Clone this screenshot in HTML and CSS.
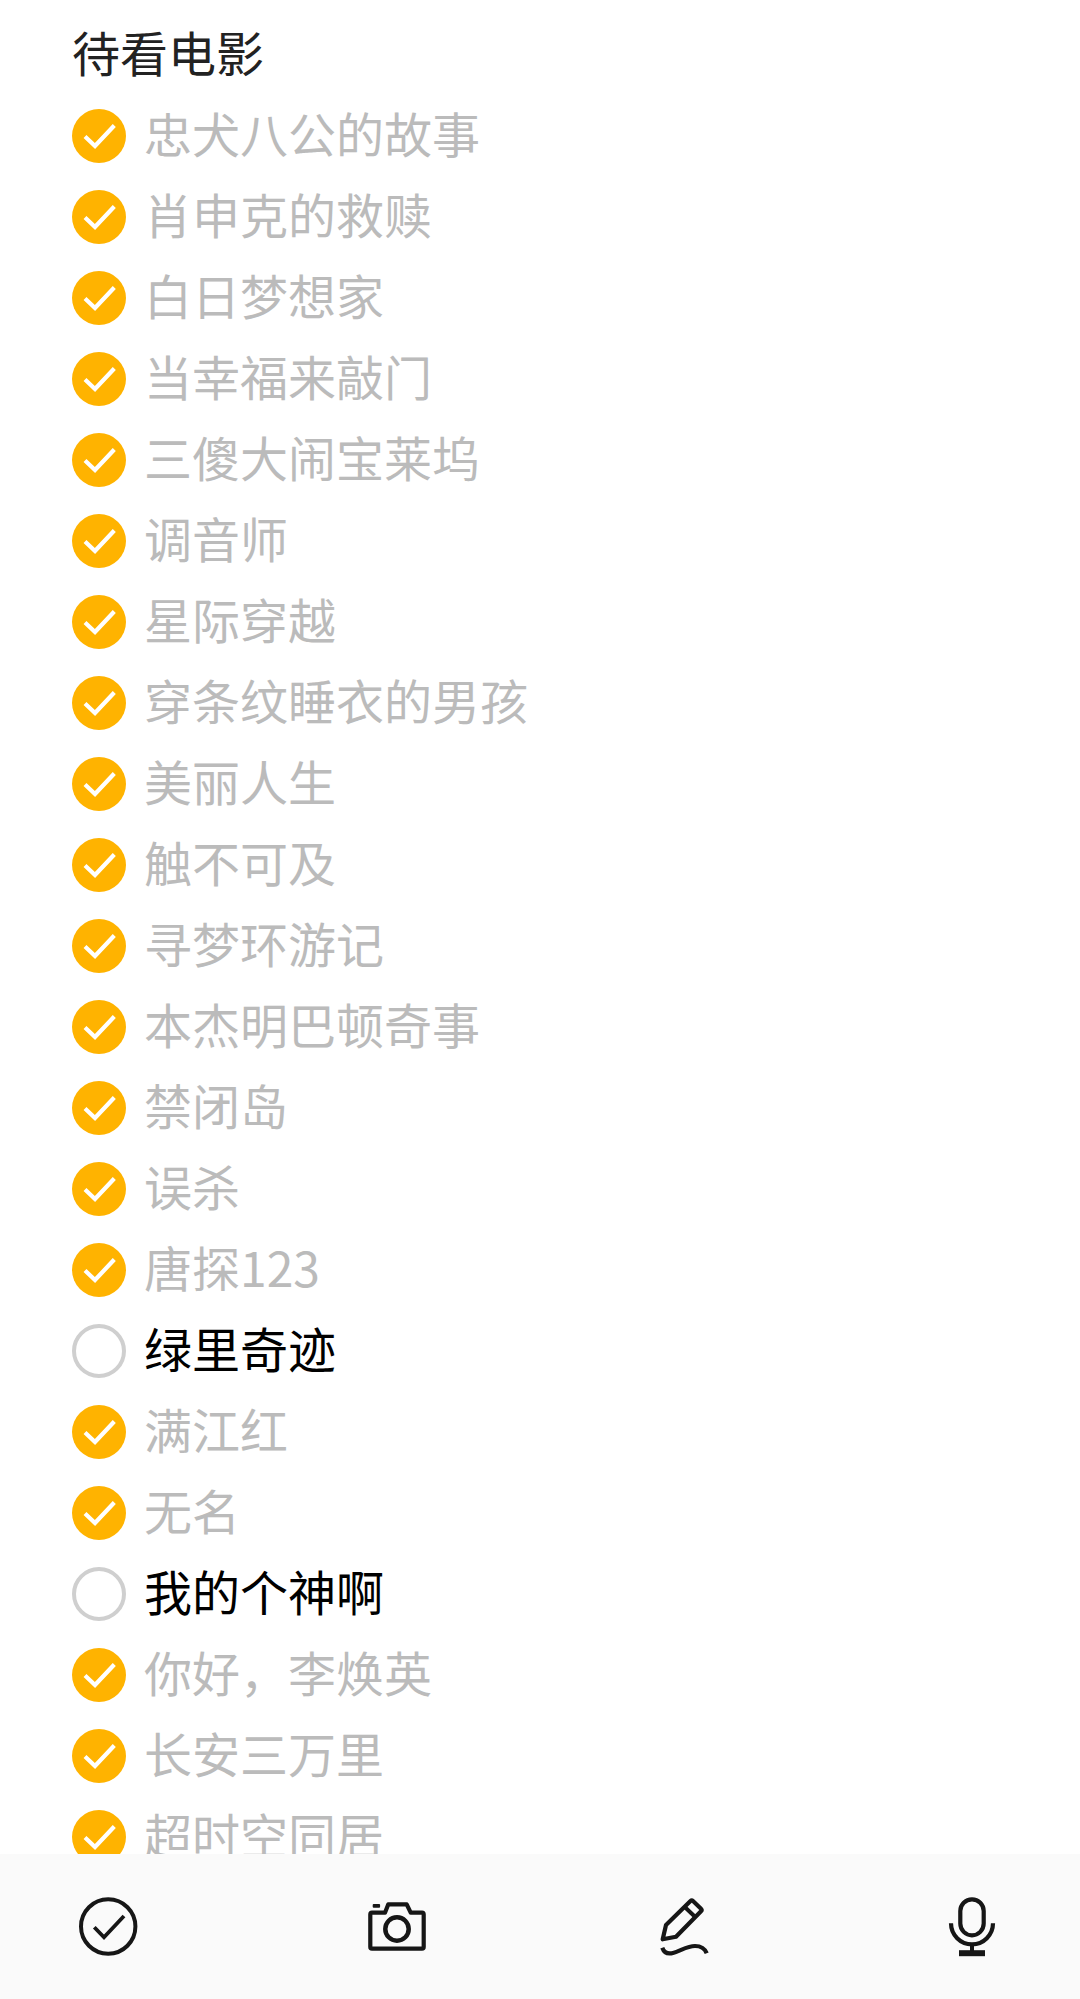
FILE: index.html
```html
<!DOCTYPE html>
<html lang="zh-CN">
<head>
<meta charset="utf-8">
<title>待看电影</title>
<link rel="stylesheet" href="styles.css">
</head>
<body>
<svg class="defs" width="0" height="0">
  <symbol id="tick-on" viewBox="0 0 54 54">
    <circle cx="27" cy="27" r="27" fill="#ffb300"/>
    <path d="M13 27.5 L23 37 L42.3 16.5" fill="none" stroke="#fff" stroke-width="4.2"/>
  </symbol>
  <symbol id="tick-off" viewBox="0 0 54 54">
    <circle cx="27" cy="27" r="25" fill="none" stroke="#cfcfcf" stroke-width="4"/>
  </symbol>
</svg>

<div class="page">
  <div class="note">
    <div class="title">待看电影</div>
    <ul class="todo">
      <li class="item done"><svg class="box"><use href="#tick-on"/></svg><span>忠犬八公的故事</span></li>
      <li class="item done"><svg class="box"><use href="#tick-on"/></svg><span>肖申克的救赎</span></li>
      <li class="item done"><svg class="box"><use href="#tick-on"/></svg><span>白日梦想家</span></li>
      <li class="item done"><svg class="box"><use href="#tick-on"/></svg><span>当幸福来敲门</span></li>
      <li class="item done"><svg class="box"><use href="#tick-on"/></svg><span>三傻大闹宝莱坞</span></li>
      <li class="item done"><svg class="box"><use href="#tick-on"/></svg><span>调音师</span></li>
      <li class="item done"><svg class="box"><use href="#tick-on"/></svg><span>星际穿越</span></li>
      <li class="item done"><svg class="box"><use href="#tick-on"/></svg><span>穿条纹睡衣的男孩</span></li>
      <li class="item done"><svg class="box"><use href="#tick-on"/></svg><span>美丽人生</span></li>
      <li class="item done"><svg class="box"><use href="#tick-on"/></svg><span>触不可及</span></li>
      <li class="item done"><svg class="box"><use href="#tick-on"/></svg><span>寻梦环游记</span></li>
      <li class="item done"><svg class="box"><use href="#tick-on"/></svg><span>本杰明巴顿奇事</span></li>
      <li class="item done"><svg class="box"><use href="#tick-on"/></svg><span>禁闭岛</span></li>
      <li class="item done"><svg class="box"><use href="#tick-on"/></svg><span>误杀</span></li>
      <li class="item done"><svg class="box"><use href="#tick-on"/></svg><span>唐探123</span></li>
      <li class="item"><svg class="box"><use href="#tick-off"/></svg><span>绿里奇迹</span></li>
      <li class="item done"><svg class="box"><use href="#tick-on"/></svg><span>满江红</span></li>
      <li class="item done"><svg class="box"><use href="#tick-on"/></svg><span>无名</span></li>
      <li class="item"><svg class="box"><use href="#tick-off"/></svg><span>我的个神啊</span></li>
      <li class="item done"><svg class="box"><use href="#tick-on"/></svg><span>你好，李焕英</span></li>
      <li class="item done"><svg class="box"><use href="#tick-on"/></svg><span>长安三万里</span></li>
      <li class="item done"><svg class="box"><use href="#tick-on"/></svg><span>超时空同居</span></li>
    </ul>
  </div>

  <div class="toolbar">
    <svg class="tool" viewBox="0 0 72 72">
      <circle cx="36.2" cy="36.5" r="27.2" stroke-width="4"/>
      <path d="M22.3 37.3 L32 47.3 L52 26" stroke-width="3.8"/>
    </svg>
    <svg class="tool" viewBox="0 0 72 72">
      <path d="M12 22.7 H25 L28.3 14.3 H46.7 L50.7 22.7 H62 Q63.7 22.7 63.7 24.4 V57 Q63.7 58.7 62 58.7 H12 Q10.3 58.7 10.3 57 V24.4 Q10.3 22.7 12 22.7 Z" stroke-width="4.2" stroke-linejoin="round"/>
      <circle cx="37" cy="39" r="11.7" stroke-width="4.5"/>
      <rect class="solid" x="12.7" y="14" width="7.4" height="3.7" rx="1"/>
    </svg>
    <svg class="tool" viewBox="0 0 72 72">
      <path d="M14.7 49.3 L18 35 L42.5 11 Q43.7 9.8 45 11 L53 18.7 Q54.3 20 53 21.3 L28 46.7 Z" stroke-width="4.2" stroke-linejoin="round"/>
      <path d="M37 17.3 L47 26.7" stroke-width="4"/>
      <path d="M14.3 57.7 C16 62.5 20 64.3 25 63 C32 61.3 39 56 47 56 C53 56 57 59 58.7 63.3" stroke-width="4.2"/>
    </svg>
    <svg class="tool" viewBox="0 0 72 72">
      <rect x="24.3" y="9.3" width="23.4" height="36" rx="11.7" stroke-width="4.2"/>
      <path d="M15 33.3 A21 21 0 0 0 57 33.3" stroke-width="4.2"/>
      <path d="M36 54.7 V63" stroke-width="4"/>
      <path d="M23 63.2 H49" stroke-width="6"/>
    </svg>
  </div>
</div>
</body>
</html>
```

FILE: styles.css
```css
html, body {
    margin: 0;
    padding: 0;
    background-color: #fff;
}

.defs {
    position: absolute;
}

.page {
    display: flex;
    flex-direction: column;
    height: 1999px;
    font-family: "Noto Sans CJK SC", "Noto Sans", sans-serif;
    font-size: 48px;
    overflow: hidden;
}

.note {
    flex: 1;
    min-height: 0;
    overflow: hidden;
    padding: 14px 0 0 72px;
}

.title {
    height: 81px;
    line-height: 75px;
    color: #222;
}

.todo {
    margin: 0;
    padding: 0;
    list-style: none;
}

.item {
    display: flex;
    align-items: center;
    gap: 18px;
    height: 81px;
    line-height: 75px;
    color: #000;
}

.item span {
    padding-bottom: 6px;
}

.item.done {
    color: #bbb;
}

.box {
    width: 54px;
    height: 54px;
    flex: none;
}

.toolbar {
    display: flex;
    justify-content: space-between;
    flex: none;
    box-sizing: border-box;
    height: 145px;
    padding: 36px 72px 0;
    background-color: #fafafa;
}

.tool {
    width: 72px;
    height: 72px;
    flex: none;
    fill: none;
    stroke: #161616;
}

.tool .solid {
    fill: #161616;
    stroke: none;
}
```
